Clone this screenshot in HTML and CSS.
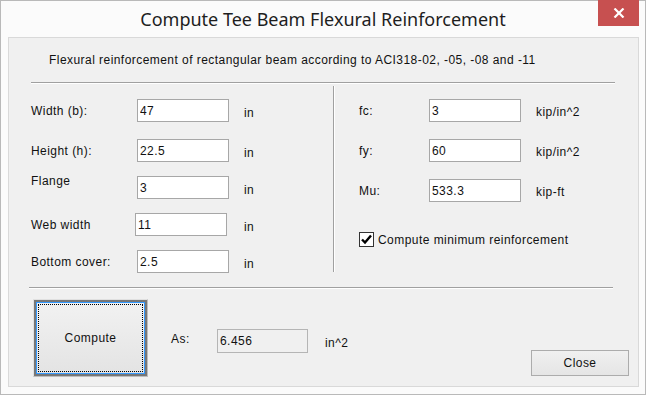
FILE: index.html
```html
<!DOCTYPE html>
<html lang="en">
<head>
    <meta charset="UTF-8">
    <title>Compute Tee Beam Flexural Reinforcement</title>
    <link rel="stylesheet" href="styles.css">
</head>
<body>
    <div class="window">
        <div class="titlebar">
            <span class="title">Compute Tee Beam Flexural Reinforcement</span>
            <button class="close-x" aria-label="Close">
                <svg width="12" height="10" viewBox="0 0 12 10">
                    <path d="M1.5 0.5 L10.5 9.5 M10.5 0.5 L1.5 9.5" stroke="#fff" stroke-width="2.2" fill="none"/>
                </svg>
            </button>
        </div>

        <div class="client">
            <p class="intro">Flexural reinforcement of rectangular beam according to ACI318-02, -05, -08 and -11</p>
            <div class="sep"></div>

            <div class="inputs">
                <div class="col col-left">
                    <div class="row">
                        <span class="lbl">Width (b):</span>
                        <input class="field" type="text" value="47">
                        <span class="unit">in</span>
                    </div>
                    <div class="row">
                        <span class="lbl">Height (h):</span>
                        <input class="field" type="text" value="22.5">
                        <span class="unit">in</span>
                    </div>
                    <div class="row row-flange">
                        <span class="lbl">Flange</span>
                        <input class="field" type="text" value="3">
                        <span class="unit">in</span>
                    </div>
                    <div class="row row-web">
                        <span class="lbl">Web width</span>
                        <input class="field" type="text" value="11">
                        <span class="unit">in</span>
                    </div>
                    <div class="row">
                        <span class="lbl">Bottom cover:</span>
                        <input class="field" type="text" value="2.5">
                        <span class="unit">in</span>
                    </div>
                </div>

                <div class="vline"></div>

                <div class="col col-right">
                    <div class="row">
                        <span class="lbl">fc:</span>
                        <input class="field" type="text" value="3">
                        <span class="unit">kip/in^2</span>
                    </div>
                    <div class="row">
                        <span class="lbl">fy:</span>
                        <input class="field" type="text" value="60">
                        <span class="unit">kip/in^2</span>
                    </div>
                    <div class="row">
                        <span class="lbl">Mu:</span>
                        <input class="field" type="text" value="533.3">
                        <span class="unit">kip-ft</span>
                    </div>
                    <label class="check">
                        <span class="box">
                            <svg width="13" height="13" viewBox="0 0 13 13">
                                <path d="M2 6.5 L5 9.5 L11 2.5" stroke="#000" stroke-width="2.4" fill="none"/>
                            </svg>
                        </span>
                        Compute minimum reinforcement
                    </label>
                </div>
            </div>

            <div class="sep sep-bottom"></div>

            <div class="footer">
                <button class="btn-compute"><span>Compute</span></button>
                <span class="as-lbl">As:</span>
                <input class="field result" type="text" value="6.456" readonly>
                <span class="as-unit">in^2</span>
                <button class="btn-close">Close</button>
            </div>
        </div>
    </div>
</body>
</html>
```

FILE: styles.css
```css
body {
    margin: 0;
    padding: 0;
    background: #fbfbfb;
    font-family: "Liberation Sans", Arial, sans-serif;
    font-size: 12px;
    letter-spacing: 0.45px;
    color: #111;
}
.window {
    width: 646px;
    height: 395px;
    box-sizing: border-box;
    border: 1px solid #b9b9b9;
    background: #fbfbfb;
    display: flex;
    flex-direction: column;
}
.titlebar {
    height: 36px;
    display: flex;
    justify-content: center;
    position: relative;
}
.title {
    font-family: "Noto Sans", sans-serif;
    font-size: 18px;
    letter-spacing: 0;
    color: #1e1e1e;
    line-height: 37px;
}
.close-x {
    position: absolute;
    right: 6px;
    top: -1px;
    width: 41px;
    height: 26px;
    border: none;
    background: #c75050;
    display: flex;
    align-items: center;
    justify-content: center;
    padding: 0;
}
.client {
    flex: 1;
    margin: 0 6px 7px 7px;
    border: 1px solid #d9d9d9;
    background: #f0f0f0;
    padding: 15px 9px 0 22px;
}
.intro {
    margin: 0 0 0 18px;
    line-height: 15px;
}
.sep {
    margin: 14px 14px 0 0;
    border-top: 1px solid #a0a0a0;
    border-bottom: 1px solid #fff;
}
/* 입력 영역 */
.inputs {
    display: flex;
    height: 203px;
}
.col {
    display: flex;
    flex-direction: column;
    padding-top: 15px;
}
.col-left {
    width: 302px;
}
.row {
    display: grid;
    grid-template-columns: 106px 92px auto;
    align-items: center;
    height: 23px;
    margin-bottom: 17px;
}
.col-right .row {
    grid-template-columns: 70px 92px auto;
}
.row-flange {
    margin-top: -3px;
    margin-bottom: 14px;
}
.row-flange .lbl {
    margin-top: -14px;
}
.row-web {
    height: 22px;
    margin-bottom: 15px;
}
.row-web .lbl {
    margin-right: 2px;
}
.row-web .field {
    margin-left: -2px;
}
.unit {
    margin-left: 15px;
    padding-top: 5px;
}
.col-right .unit {
    padding-top: 2px;
}
.field {
    width: 92px;
    height: 23px;
    box-sizing: border-box;
    border: 1px solid #a7a7a7;
    background: #fff;
    font-family: "Liberation Sans", Arial, sans-serif;
    font-size: 12px;
    letter-spacing: 0.45px;
    padding: 0 2px;
    margin: 0;
    color: #111;
}
.vline {
    width: 1px;
    margin: 2px 0 15px 0;
    background: #a0a0a0;
    border-right: 1px solid #fff;
}
.col-right {
    margin-left: 24px;
}
.check {
    display: flex;
    align-items: center;
    gap: 4px;
    margin-top: 13px;
}
.box {
    width: 13px;
    height: 13px;
    border: 1px solid #333;
    background: #fff;
    display: flex;
}
/* 하단 버튼 영역 */
.sep-bottom {
    margin-top: 0;
    margin-left: -2px;
    margin-right: 16px;
}
.footer {
    display: flex;
    align-items: flex-start;
    padding-top: 10px;
}
.btn-compute {
    margin-left: 2px;
    width: 115px;
    height: 78px;
    border: 1px solid #e0e0e0;
    border-right-color: #bdbdbd;
    border-bottom-color: #bdbdbd;
    background: linear-gradient(#f2f2f2, #e3e3e3);
    box-shadow: inset 0 0 0 2px #777, inset 0 0 0 3px #3399ff;
    outline: 1px dotted #000;
    outline-offset: -6px;
    font-family: "Liberation Sans", Arial, sans-serif;
    font-size: 12px;
    letter-spacing: 0.45px;
    padding: 0;
    color: #111;
}
.as-lbl {
    margin: 33px 0 0 23px;
    width: 46px;
}
.result {
    margin-top: 30px;
    width: 91px;
    height: 24px;
    background: #f0f0f0;
    border-color: #b5b5b5;
}
.as-unit {
    margin: 37px 0 0 17px;
}
.btn-close {
    margin: 51px 0 0 auto;
    width: 98px;
    height: 26px;
    border: 1px solid #acacac;
    background: linear-gradient(#f0f0f0, #e5e5e5);
    font-family: "Liberation Sans", Arial, sans-serif;
    font-size: 12px;
    letter-spacing: 0.45px;
    color: #111;
    padding: 0;
}
```
